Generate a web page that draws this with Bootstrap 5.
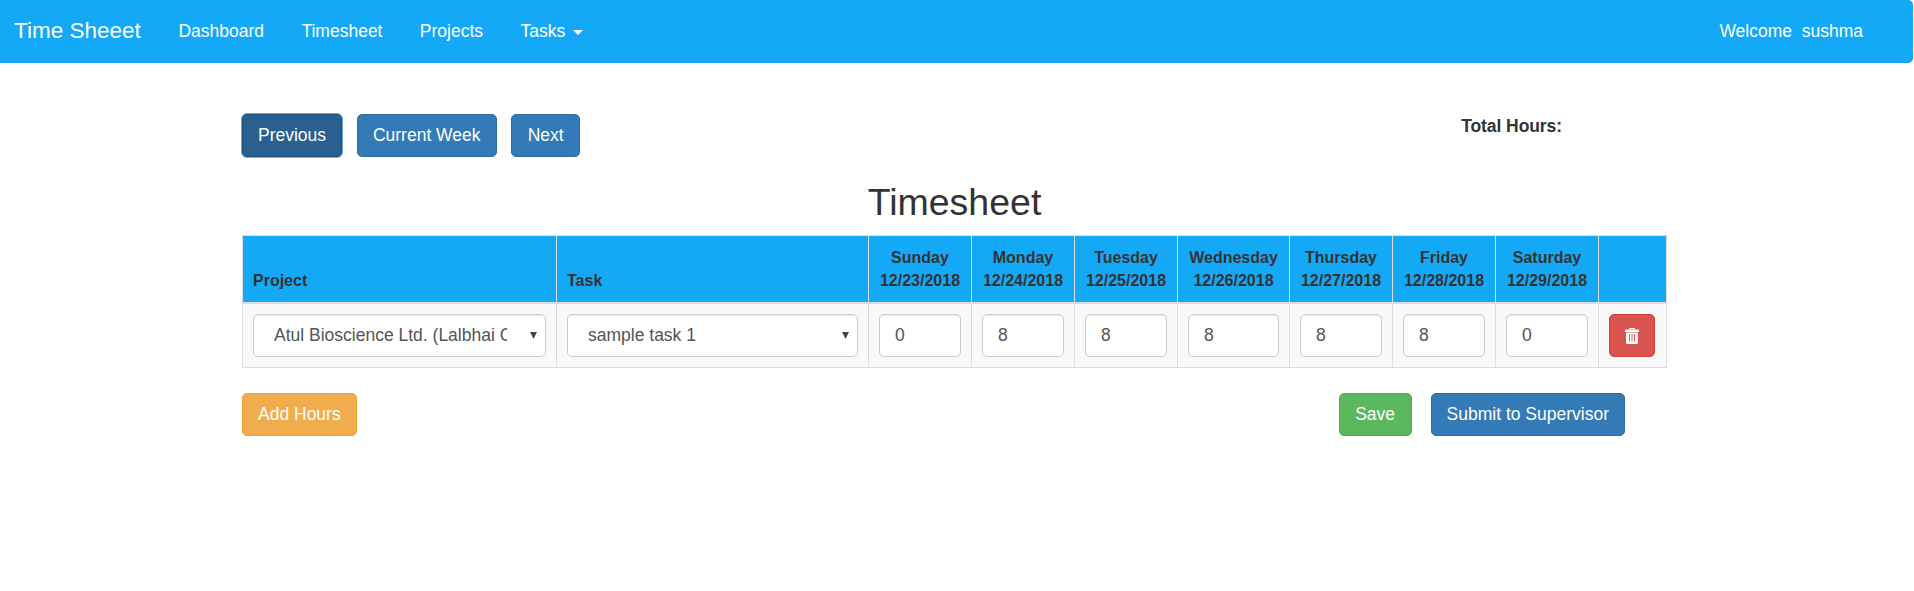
<!DOCTYPE html>
<html lang="en">
<head>
<meta charset="utf-8">
<meta name="viewport" content="width=device-width, initial-scale=1">
<title>Time Sheeet</title>
<link href="https://cdn.jsdelivr.net/npm/bootstrap@5.3.0/dist/css/bootstrap.min.css" rel="stylesheet">
<style>
  body { font-family: "Liberation Sans", Arial, sans-serif; font-size: 17.5px; line-height: 1.42857; color: #333; background: #fff; overflow: hidden; }
  .topbar { height: 63px; background: #13a9f6; border-bottom: 1px solid #1b9fe3; border-radius: 0 5px 5px 0; margin-right: 1px; padding: 0 50px 0 14px; }
  .topbar .navbar-brand { font-size: 22.5px; color: #fff; margin-right: 19px; padding: 0; }
  .topbar .nav-link { color: #fff; padding: 0 18.7px; }
  .topbar .dropdown-toggle::after { border-width: 5px 5px 0; margin-left: 8px; vertical-align: 2px; }
  .sheet { width: 1425px; margin-left: 242px; }
  .btn { --bs-btn-font-size: 17.5px; --bs-btn-line-height: 24.5px; --bs-btn-padding-x: 15px; --bs-btn-padding-y: 8px; --bs-btn-border-radius: 5px; height: 43px; white-space: nowrap; }
  .btn-primary { --bs-btn-bg: #337ab7; --bs-btn-border-color: #2e6da4; }
  .btn-primary.active { --bs-btn-active-bg: #286090; --bs-btn-active-border-color: #204d74; box-shadow: 0 0 0 1px #79a7e6; }
  .btn-warning { --bs-btn-color: #fff; --bs-btn-bg: #f0ad4e; --bs-btn-border-color: #eea236; }
  .btn-success { --bs-btn-bg: #5cb85c; --bs-btn-border-color: #4cae4c; --bs-btn-padding-x: 15.5px; }
  .btn-danger { --bs-btn-bg: #d9534f; --bs-btn-border-color: #d43f3a; }
  .controls { padding-top: 51px; gap: 14.5px; }
  .controls .btn + .btn { --bs-btn-padding-x: 15.3px; }
  .total { margin-right: 105px; letter-spacing: -.08px; }
  h2 { font-size: 37.5px; line-height: 41px; margin: 25px 0 12px; color: #333; }
  .hours { table-layout: fixed; width: 1425px; border-color: #ddd; margin: 0; }
  .hours > :not(caption) > * > * { padding: 10px; border: 1px solid #ddd; box-shadow: none; }
  .hours > thead > tr > th { background: #13a9f6; color: #333; font-size: 16px; line-height: 23px; height: 67px; vertical-align: bottom; border-bottom: 2px solid #ddd; white-space: nowrap; }
  .hours > thead > tr > th.day { padding-left: 0; padding-right: 0; }
  .hours > tbody > tr > td { background: #f9f9f9; height: 64px; vertical-align: top; }
  .hours .form-control, .hours .form-select { height: 43px; font-size: 17.5px; line-height: 25px; color: #555; border: 1px solid #ccc; border-radius: 5px; padding: 7px 15px; box-shadow: inset 0 1px 1px rgba(0,0,0,.075); }
  .hours .form-select { padding: 7px 38px 7px 20px; background: #fff url("data:image/svg+xml,%3Csvg xmlns='http://www.w3.org/2000/svg' viewBox='0 0 7 7'%3E%3Cpath fill='%23444' d='M0 0h7L3.5 7z'/%3E%3C/svg%3E") no-repeat right 8px center / 7px 7px; }
  .trash { display: block; }
  .actions { margin-top: 25px; }
  .submit-group { gap: 19px; margin-right: 42px; }
</style>
</head>
<body>
<nav class="topbar d-flex align-items-center">
  <a class="navbar-brand" href="#">Time Sheeet</a>
  <ul class="nav flex-nowrap me-auto">
    <li class="nav-item"><a class="nav-link" href="#">Dashboard</a></li>
    <li class="nav-item"><a class="nav-link" href="#">Timesheet</a></li>
    <li class="nav-item"><a class="nav-link" href="#">Projects</a></li>
    <li class="nav-item dropdown"><a class="nav-link dropdown-toggle" href="#" data-bs-toggle="dropdown">Tasks</a></li>
  </ul>
  <span class="text-white">Welcome&nbsp; sushma</span>
</nav>

<main class="sheet">
  <div class="controls d-flex align-items-start">
    <button class="btn btn-primary active" type="button">Previous</button>
    <button class="btn btn-primary" type="button">Current Week</button>
    <button class="btn btn-primary" type="button">Next</button>
    <strong class="total ms-auto">Total Hours:</strong>
  </div>

  <h2 class="text-center">Timesheet</h2>

  <table class="table hours">
    <colgroup>
      <col style="width:314px"><col style="width:312px"><col style="width:103px"><col style="width:103px"><col style="width:103px"><col style="width:112px"><col style="width:103px"><col style="width:103px"><col style="width:103px"><col>
    </colgroup>
    <thead>
      <tr>
        <th>Project</th>
        <th>Task</th>
        <th class="day text-center">Sunday<br>12/23/2018</th>
        <th class="day text-center">Monday<br>12/24/2018</th>
        <th class="day text-center">Tuesday<br>12/25/2018</th>
        <th class="day text-center">Wednesday<br>12/26/2018</th>
        <th class="day text-center">Thursday<br>12/27/2018</th>
        <th class="day text-center">Friday<br>12/28/2018</th>
        <th class="day text-center">Saturday<br>12/29/2018</th>
        <th></th>
      </tr>
    </thead>
    <tbody>
      <tr>
        <td><select class="form-select"><option>Atul Bioscience Ltd. (Lalbhai Group)</option></select></td>
        <td><select class="form-select"><option>sample task 1</option></select></td>
        <td><input class="form-control" type="text" value="0"></td>
        <td><input class="form-control" type="text" value="8"></td>
        <td><input class="form-control" type="text" value="8"></td>
        <td><input class="form-control" type="text" value="8"></td>
        <td><input class="form-control" type="text" value="8"></td>
        <td><input class="form-control" type="text" value="8"></td>
        <td><input class="form-control" type="text" value="0"></td>
        <td>
          <button class="btn btn-danger" type="button" aria-label="Delete">
            <svg class="trash" width="14" height="16" viewBox="0 0 14 16" fill="#fff"><path fill-rule="evenodd" d="M4 1.500V1q0-1 1-1h4q1 0 1 1v.5h3q1 0 1 1V4H0V2.500q0-1 1-1zM5 1.500h4V1H5zM1 4.500h12V15q0 1-1 1H2q-1 0-1-1zM4 6v7.500h.9V6zM6.550 6v7.500h.9V6zM9.100 6v7.500h.9V6z"/></svg>
          </button>
        </td>
      </tr>
    </tbody>
  </table>

  <div class="actions d-flex">
    <button class="btn btn-warning" type="button">Add Hours</button>
    <div class="submit-group ms-auto d-flex">
      <button class="btn btn-success" type="button">Save</button>
      <button class="btn btn-primary" type="button">Submit to Supervisor</button>
    </div>
  </div>
</main>
<script src="https://cdn.jsdelivr.net/npm/bootstrap@5.3.0/dist/js/bootstrap.bundle.min.js"></script>
</body>
</html>
